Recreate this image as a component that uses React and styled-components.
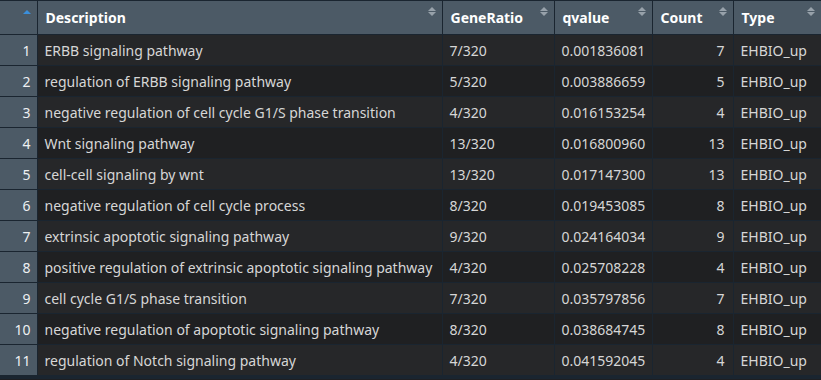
import React from 'react';
import styled, { createGlobalStyle } from 'styled-components';

const GlobalStyle = createGlobalStyle`
  html, body { margin: 0; padding: 0; background: #1e1f22; }
  body { font-family: "Noto Sans", "Open Sans", sans-serif; }
`;

const rows = [
  ['ERBB signaling pathway', '7/320', '0.001836081', 7],
  ['regulation of ERBB signaling pathway', '5/320', '0.003886659', 5],
  ['negative regulation of cell cycle G1/S phase transition', '4/320', '0.016153254', 4],
  ['Wnt signaling pathway', '13/320', '0.016800960', 13],
  ['cell-cell signaling by wnt', '13/320', '0.017147300', 13],
  ['negative regulation of cell cycle process', '8/320', '0.019453085', 8],
  ['extrinsic apoptotic signaling pathway', '9/320', '0.024164034', 9],
  ['positive regulation of extrinsic apoptotic signaling pathway', '4/320', '0.025708228', 4],
  ['cell cycle G1/S phase transition', '7/320', '0.035797856', 7],
  ['negative regulation of apoptotic signaling pathway', '8/320', '0.038684745', 8],
  ['regulation of Notch signaling pathway', '4/320', '0.041592045', 4],
];

const columns = [
  { label: 'Description', width: 405 },
  { label: 'GeneRatio', width: 112 },
  { label: 'qvalue', width: 98 },
  { label: 'Count', width: 81 },
  { label: 'Type', width: 88 },
];

const Grid = styled.table`
  border-collapse: collapse;
  table-layout: fixed;
  width: 821px;
  border-top: 1px solid #1a2530;
  border-bottom: 4px solid #1a2530;
  font-size: 14px;
  color: #d6d6d6;
`;

const HeadCell = styled.th`
  position: relative;
  height: 33px;
  padding: 0 8px;
  background: #4c5a66;
  color: #ffffff;
  font-weight: 700;
  text-align: left;
  border-right: 1px solid #1a2530;
  border-bottom: 1px solid #1a2530;
  &:last-child { border-right: none; }
`;

const IndexCell = styled.td`
  background: #4c5a66;
  color: #eef0f2;
  text-align: right;
  padding: 0 6px 0 0;
  height: 30px;
  border-right: 1px solid #1a2530;
  border-bottom: 1px solid #1a2530;
`;

const Cell = styled.td`
  height: 30px;
  padding: 0 8px 0 7px;
  white-space: nowrap;
  overflow: hidden;
  text-align: ${p => (p.$right ? 'right' : 'left')};
  background: ${p => (p.$odd ? '#262729' : '#1f2022')};
  border-right: 1px solid #1a2530;
  border-bottom: 1px solid #1a2530;
  &:last-child { border-right: none; }
`;

const SortMark = styled.span`
  position: absolute;
  top: 6px;
  right: 6px;
  display: flex;
  flex-direction: column;
  gap: 1px;
`;

const Caret = styled.span`
  width: 0;
  height: 0;
  border-left: 4px solid transparent;
  border-right: 4px solid transparent;
  ${p => (p.$down
    ? 'border-top: 4px solid #97a1aa;'
    : `border-bottom: 4px solid ${p.$active ? '#3a8fdc' : '#97a1aa'};`)}
`;

export default function App() {
  return (
    <>
      <GlobalStyle />
      <Grid>
        <colgroup>
          <col style={{ width: 37 }} />
          {columns.map(c => <col key={c.label} style={{ width: c.width }} />)}
        </colgroup>
        <thead>
          <tr>
            <HeadCell>
              <SortMark style={{ top: 9 }}>
                <Caret $active />
              </SortMark>
            </HeadCell>
            {columns.map(c => (
              <HeadCell key={c.label}>
                {c.label}
                <SortMark>
                  <Caret />
                  <Caret $down />
                </SortMark>
              </HeadCell>
            ))}
          </tr>
        </thead>
        <tbody>
          {rows.map((r, i) => {
            const odd = i % 2 === 0;
            return (
              <tr key={i}>
                <IndexCell>{i + 1}</IndexCell>
                <Cell $odd={odd}>{r[0]}</Cell>
                <Cell $odd={odd}>{r[1]}</Cell>
                <Cell $odd={odd}>{r[2]}</Cell>
                <Cell $odd={odd} $right>{r[3]}</Cell>
                <Cell $odd={odd}>EHBIO_up</Cell>
              </tr>
            );
          })}
        </tbody>
      </Grid>
    </>
  );
}
